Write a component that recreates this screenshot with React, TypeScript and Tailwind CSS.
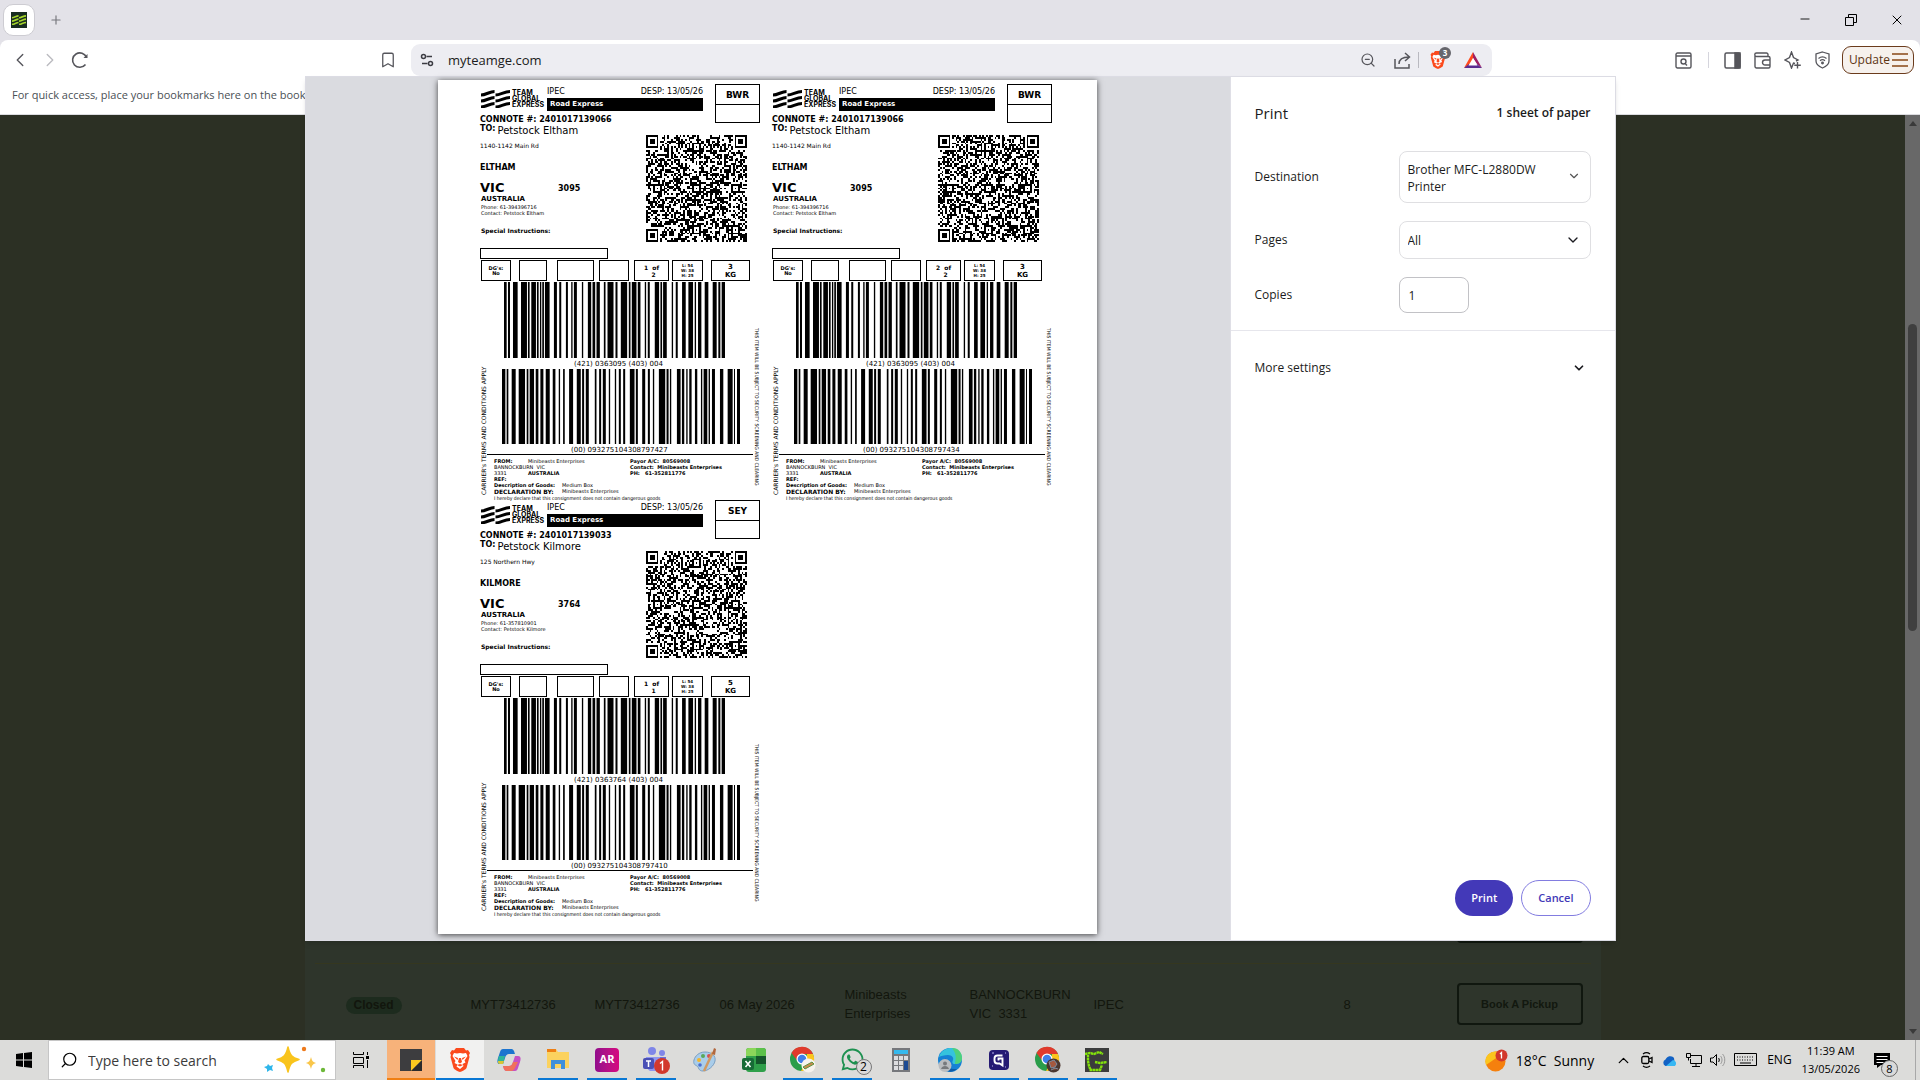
import type { ReactNode } from 'react'
import { Bookmark, ChevronDown, ChevronLeft, ChevronRight, ChevronUp, Minus, Plus, Search, X, ZoomOut } from 'lucide-react'
import { FaWhatsapp } from 'react-icons/fa'

type Consignment = {
  depot: string
  connote: string
  name: string
  street: string
  suburb: string
  postcode: string
  phone: string
  item: string
  count: string
  weight: string
  routing: string
  sscc: string
  seed: number
}

const consignments: Consignment[] = [
  {
    depot: 'BWR', connote: '2401017139066', name: 'Petstock Eltham', street: '1140-1142 Main Rd', suburb: 'ELTHAM',
    postcode: '3095', phone: '61-394396716', item: '1', count: '2', weight: '3',
    routing: '(421) 0363095 (403) 004', sscc: '(00) 093275104308797427', seed: 11,
  },
  {
    depot: 'BWR', connote: '2401017139066', name: 'Petstock Eltham', street: '1140-1142 Main Rd', suburb: 'ELTHAM',
    postcode: '3095', phone: '61-394396716', item: '2', count: '2', weight: '3',
    routing: '(421) 0363095 (403) 004', sscc: '(00) 093275104308797434', seed: 29,
  },
  {
    depot: 'SEY', connote: '2401017139033', name: 'Petstock Kilmore', street: '125 Northern Hwy', suburb: 'KILMORE',
    postcode: '3764', phone: '61-357810901', item: '1', count: '1', weight: '5',
    routing: '(421) 0363764 (403) 004', sscc: '(00) 093275104308797410', seed: 47,
  },
]

// start / end pairs of each bar
const routingBars = [
  222, 230, 234, 240, 249, 263, 273, 291, 294, 299, 304, 318, 321, 326, 330, 334, 337, 342, 345, 359, 372, 381, 388, 394,
  408, 414, 424, 428, 432, 441, 456, 460, 474, 484, 488, 496, 500, 510, 522, 527, 533, 551, 557, 563, 573, 592, 597, 602,
  606, 620, 624, 632, 645, 649, 654, 660, 675, 688, 692, 697, 700, 711, 726, 730, 738, 744, 757, 768, 776, 790, 795, 799,
  805, 815, 825, 836, 849, 861, 866, 872, 876, 886,
]
const ssccBars = [
  217, 227, 231, 236, 246, 258, 267, 286, 291, 296, 300, 313, 318, 326, 332, 341, 348, 360, 369, 377, 387, 391, 400, 405,
  418, 430, 441, 453, 457, 463, 468, 477, 495, 500, 508, 514, 519, 528, 537, 541, 555, 559, 567, 573, 580, 586, 600, 614,
  618, 624, 637, 646, 654, 660, 669, 673, 687, 706, 710, 716, 720, 724, 741, 752, 756, 763, 769, 773, 778, 785, 795, 802,
  813, 817, 821, 832, 836, 840, 846, 855, 870, 880, 893, 908, 912, 915, 921, 930,
]

function Barcode({ bars, className }: { bars: number[]; className: string }) {
  const start = bars[0]
  const end = bars[bars.length - 1]
  let d = ''
  for (let i = 0; i < bars.length; i += 2) {
    d += `M${bars[i] - start} 0H${bars[i + 1] - start}V10H${bars[i] - start}Z`
  }
  return (
    <svg className={className} viewBox={`0 0 ${end - start} 10`} preserveAspectRatio="none" aria-hidden="true">
      <path d={d} fill="#000" />
    </svg>
  )
}

const QR_SIZE = 57

function qrPath(seed: number) {
  let state = seed * 7919
  const random = () => {
    state = (state * 1103515245 + 12345) % 2147483648
    return state / 2147483648
  }
  const ring = (x: number, y: number, cx: number, cy: number) => Math.max(Math.abs(x - cx), Math.abs(y - cy))
  const far = QR_SIZE - 4
  const finders = [[3, 3], [far, 3], [3, far]]
  const aligns = [[28, 6], [6, 28], [28, 28], [50, 28], [28, 50], [50, 50]]
  let d = ''
  for (let y = 0; y < QR_SIZE; y++) {
    for (let x = 0; x < QR_SIZE; x++) {
      let on = random() > 0.5
      if (x === 6) on = y % 2 === 0
      if (y === 6) on = x % 2 === 0
      for (const [cx, cy] of aligns) {
        const r = ring(x, y, cx, cy)
        if (r <= 2) on = r !== 1
      }
      for (const [cx, cy] of finders) {
        const r = ring(x, y, cx, cy)
        if (r <= 4) on = r !== 2 && r !== 4
      }
      if (on) d += `M${x} ${y}h1v1h-1z`
    }
  }
  return d
}

function QrCode({ seed }: { seed: number }) {
  return (
    <svg className="h-[107px] w-[101px]" viewBox="0 0 57 57" preserveAspectRatio="none" shapeRendering="crispEdges" aria-hidden="true">
      <path d={qrPath(seed)} fill="#000" />
    </svg>
  )
}

function Stripes({ className, color }: { className: string; color: string }) {
  return (
    <svg className={className} viewBox="0 0 30 18" preserveAspectRatio="none" fill="none" stroke={color} strokeWidth="3" aria-hidden="true">
      <path d="M0 5C5 5 9 1.500 14 1.500M15 5C20 5 24 1.500 30 1.500M0 11C5 11 9 7.500 14 7.500M15 11C20 11 24 7.500 30 7.500M0 17C5 17 9 13.500 14 13.500M15 17C20 17 24 13.500 30 13.500" />
    </svg>
  )
}

function Cell({ className, children }: { className: string; children?: ReactNode }) {
  return <div className={`flex h-[21px] flex-col items-center justify-center border border-black font-bold ${className}`}>{children}</div>
}

function ShippingLabel({ item }: { item: Consignment }) {
  return (
    <article className="h-[416px] w-[280px] font-['DejaVu_Sans',Verdana,sans-serif] text-black">
      <div className="flex h-[52px] justify-between">
        <div className="w-[223px]">
          <div className="flex h-[30px]">
            <div className="flex w-[67px] gap-[2px] pt-[7px]">
              <Stripes className="ml-px h-[18px] w-[29px]" color="#000" />
              <div className="font-['Inter',sans-serif] text-[7px] leading-[6px] font-bold">
                <div>TEAM</div>
                <div>GLOBAL</div>
                <div>EXPRESS</div>
              </div>
            </div>
            <div className="flex-1">
              <div className="flex h-[15px] items-center justify-between pt-[2px] leading-none">
                <span className="text-[8px]">IPEC</span>
                <span className="text-[8px]">DESP: 13/05/26</span>
              </div>
              <div className="h-[13px] bg-black pl-[3px] text-[7px] leading-[13px] font-bold text-white">Road Express</div>
            </div>
          </div>
          <div className="h-[11px] text-[8px] leading-[13px] font-bold whitespace-nowrap">CONNOTE #: {item.connote}</div>
          <div className="flex h-[11px] gap-[2px] whitespace-nowrap">
            <span className="text-[8px] leading-[10px] font-bold">TO:</span>
            <span className="text-[10px] leading-[13px]">{item.name}</span>
          </div>
        </div>
        <div className="mt-px h-[39px] w-[45px] border border-black text-center text-[9px] font-bold">
          <div className="h-5 border-b border-black leading-[20px]">{item.depot}</div>
        </div>
      </div>

      <div className="flex h-[113px] justify-between pr-[13px]">
        <div className="whitespace-nowrap">
          <div className="pt-[7px] text-[6px] leading-[8px]">{item.street}</div>
          <div className="pt-[13px] text-[8px] leading-[10px] font-bold">{item.suburb}</div>
          <div className="flex pt-2 font-bold">
            <span className="w-[78px] text-[13px] leading-[14px]">VIC</span>
            <span className="text-[8px] leading-[16px]">{item.postcode}</span>
          </div>
          <div className="pl-px text-[7px] leading-[4px] font-bold">AUSTRALIA</div>
          <div className="pt-[3px] pl-px text-[5px] leading-[6px]">
            <div>Phone: {item.phone}</div>
            <div>Contact: {item.name}</div>
          </div>
          <div className="pt-[11px] pl-px text-[6px] leading-[8px] font-bold">Special Instructions:</div>
        </div>
        <QrCode seed={item.seed} />
      </div>

      <div className="h-[11px] w-[128px] border border-black"></div>
      <div className="mt-px flex pl-px">
        <Cell className="w-[30px] text-[5px] leading-[5px]">
          <div>DG's:</div>
          <div>No</div>
        </Cell>
        <Cell className="ml-2 w-[28px]" />
        <Cell className="ml-[10px] w-[37px]" />
        <Cell className="ml-[5px] w-[30px]" />
        <Cell className="ml-[5px] w-[35px] text-[6px] leading-[7px]">
          <div className="whitespace-pre">{item.item}  of</div>
          <div className="pl-1">{item.count}</div>
        </Cell>
        <Cell className="ml-[3px] w-[31px] text-[4px] leading-[5px]">
          <div>L: 54</div>
          <div>W: 38</div>
          <div>H: 25</div>
        </Cell>
        <Cell className="ml-2 w-[39px] text-[7px] leading-[8px]">
          <div>{item.weight}</div>
          <div>KG</div>
        </Cell>
      </div>

      <div className="flex h-[218px]">
        <div className="flex w-[7px] rotate-180 items-start pt-1 text-[6px] leading-[7px] whitespace-nowrap [writing-mode:vertical-rl]">
          CARRIER's TERMS AND CONDITIONS APPLY
        </div>
        <div className="flex-1">
          <Barcode bars={routingBars} className="mt-px ml-[17px] h-[76px] w-[221px]" />
          <div className="h-[11px] pl-[87px] text-[7px] leading-[12px]">{item.routing}</div>
          <Barcode bars={ssccBars} className="ml-[15px] h-[75px] w-[238px]" />
          <div className="h-[11px] border-b border-black pl-[84px] text-[7px] leading-[12px]">{item.sscc}</div>
          <div className="pt-[3px] pl-[7px] text-[5px] leading-[6px] whitespace-nowrap">
            <div className="flex">
              <div className="w-[136px]">
                <div className="flex">
                  <span className="w-[34px] font-bold">FROM:</span>
                  <span>Minibeasts Enterprises</span>
                </div>
                <div className="whitespace-pre">BANNOCKBURN  VIC</div>
                <div className="flex">
                  <span className="w-[34px]">3331</span>
                  <span className="font-bold">AUSTRALIA</span>
                </div>
                <div className="font-bold">REF:</div>
              </div>
              <div className="font-bold whitespace-pre">
                <div>Payor A/C:  80569008</div>
                <div>Contact:  Minibeasts Enterprises</div>
                <div>PH:   61-352811776</div>
              </div>
            </div>
            <div className="flex">
              <span className="w-[68px] font-bold">Description of Goods:</span>
              <span>Medium Box</span>
            </div>
            <div className="flex leading-[7px]">
              <span className="w-[68px] text-[6px] font-bold">DECLARATION BY:</span>
              <span>Minibeasts Enterprises</span>
            </div>
            <div className="font-['DejaVu_Sans_Condensed','DejaVu_Sans',sans-serif]">
              I hereby declare that this consignment does not contain dangerous goods
            </div>
          </div>
        </div>
        <div className="w-[7px] pt-[47px] font-['Liberation_Sans_Narrow','DejaVu_Sans_Condensed',sans-serif] text-[5px] leading-[7px] whitespace-nowrap [writing-mode:vertical-rl]">
          THIS ITEM WILL BE SUBJECT TO SECURITY SCREENING AND CLEARING
        </div>
      </div>
    </article>
  )
}

function PrintDialog() {
  return (
    <div role="dialog" aria-label="Print" className="flex w-[1311px] max-w-full border border-[#dcdce4] bg-white font-['Open_Sans','Noto_Sans',sans-serif] text-[12px] text-[#1b1b20] shadow-md">
      <div className="flex flex-1 justify-center bg-[#dadbe0] pt-[3px] pb-[6px]">
        <div className="grid min-h-[854px] w-[659px] auto-rows-max grid-cols-[292px_292px] bg-white pt-[3px] pl-[42px] shadow-[0_1px_6px_rgba(0,0,0,0.7)]">
          {consignments.map((item) => (
            <ShippingLabel key={item.seed} item={item} />
          ))}
        </div>
      </div>

      <form className="flex w-[385px] flex-col border-l border-[#dfdfe6]">
        <div className="flex items-center justify-between px-6 pt-6">
          <h1 className="text-[15px] leading-6">Print</h1>
          <span className="font-semibold">1 sheet of paper</span>
        </div>
        <div className="mt-[26px] flex items-center justify-between px-6">
          <label htmlFor="destination">Destination</label>
          <div className="relative w-[192px]">
            <select id="destination" className="h-[52px] w-full appearance-none rounded-lg border border-[#dfdfe2] bg-white pt-[2px] pr-10 pl-2 leading-[17px] whitespace-normal">
              <option>Brother MFC-L2880DW Printer</option>
            </select>
            <ChevronDown className="pointer-events-none absolute top-[18px] right-[10px] size-[14px] text-[#555]" />
          </div>
        </div>
        <div className="mt-[18px] flex items-center justify-between px-6">
          <label htmlFor="pages">Pages</label>
          <div className="relative w-[192px]">
            <select id="pages" className="h-[38px] w-full appearance-none rounded-lg border border-[#dfdfe2] bg-white pt-[2px] pr-10 pl-2">
              <option>All</option>
            </select>
            <ChevronDown className="pointer-events-none absolute top-[11px] right-[10px] size-4" />
          </div>
        </div>
        <div className="mt-[18px] flex items-center px-6">
          <label htmlFor="copies" className="w-[144px]">Copies</label>
          <input id="copies" type="text" defaultValue="1" className="h-9 w-[70px] rounded-lg border border-[#c2c2c6] bg-white px-[9px]" />
        </div>
        <button type="button" className="mt-[17px] flex h-[74px] items-center justify-between border-t border-[#e6e6ec] pr-[29px] pl-6">
          More settings
          <ChevronDown className="size-[14px]" strokeWidth={3} />
        </button>
        <div className="mt-auto flex justify-end gap-2 px-6 pb-6 text-[11px] font-semibold">
          <button type="submit" className="h-9 rounded-full bg-[#4339b8] px-4 text-white">Print</button>
          <button type="button" className="h-9 rounded-full border border-[#827ce0] px-4 text-[#4339b8]">Cancel</button>
        </div>
      </form>
    </div>
  )
}

function BraveIcon({ className }: { className: string }) {
  return (
    <svg className={className} viewBox="0 0 20 24" aria-hidden="true">
      <path d="M6 0h8l2 2.500 2-.5 2 3-1 2 .5 2-3 11c-.5 1.500-5 3.500-6.500 4-1.500-.5-6-2.500-6.500-4L.500 9 1 7 0 5l2-3 2 .5z" fill="#fb4a1d" />
      <path d="M4 5l3 .5L10 5l3 .5 3-.5 1.500 3-3 4.500 1 2-3 1.500 1 2L10 21l-3.500-2.500 1-2-3-1.500 1-2-3-5z" fill="#fff" />
      <path d="M4 8.500l4 1.500-.5 2zM16 8.500L12 10l.5 2zM9 10h2l1 4-2 1.500L8 14zM7 17l3-1 3 1-3 1.500z" fill="#fb4a1d" />
    </svg>
  )
}

function TuneIcon() {
  return (
    <svg className="size-[14px]" viewBox="0 0 14 14" fill="none" stroke="#3c3c43" strokeWidth="1.500" aria-hidden="true">
      <circle cx="3.500" cy="3.500" r="2" />
      <path d="M6.500 3.500H12M2 10.500h5.500" />
      <circle cx="10.500" cy="10.500" r="2" />
    </svg>
  )
}

function BrowserChrome() {
  return (
    <header className="bg-[#e3e2e8] font-['Open_Sans','Noto_Sans',sans-serif]">
      <div className="flex h-10 items-center">
        <button type="button" aria-label="Team Global Express tab" className="ml-[3px] flex h-8 w-8 items-center justify-center rounded-[10px] border border-[#cdccd2] bg-white">
          <span className="flex size-4 items-center justify-center bg-[#182c20]">
            <Stripes className="h-[10px] w-[14px]" color="#a5d62b" />
          </span>
        </button>
        <button type="button" aria-label="New tab" className="ml-[14px] text-[#77777d]">
          <Plus className="size-[14px]" />
        </button>
        <div className="ml-auto flex text-black">
          <button type="button" aria-label="Minimize" className="flex w-[46px] justify-center"><Minus className="size-[14px]" strokeWidth={1.5} /></button>
          <button type="button" aria-label="Restore" className="flex w-[46px] items-center justify-center">
            <svg className="size-3" viewBox="0 0 12 12" fill="none" stroke="currentColor">
              <path d="M.5 3.500h8v8h-8zM3.500 3.500v-3h8v8h-3" />
            </svg>
          </button>
          <button type="button" aria-label="Close" className="flex w-[46px] justify-center"><X className="size-4" strokeWidth={1.5} /></button>
        </div>
      </div>

      <div className="rounded-t-lg bg-white">
        <div className="flex h-10 items-center text-[#55555b]">
          <button type="button" aria-label="Back" className="ml-[9px]"><ChevronLeft className="size-[22px]" strokeWidth={1.5} /></button>
          <button type="button" aria-label="Forward" className="ml-2 text-[#bbbbc0]"><ChevronRight className="size-[22px]" strokeWidth={1.5} /></button>
          <button type="button" aria-label="Reload" className="ml-[10px]">
            <svg className="size-[18px]" viewBox="0 0 18 18" fill="none" stroke="currentColor" strokeWidth="1.600">
              <path d="M14.500 13.500A7.200 7.200 0 1 1 15.500 6.500" />
              <path d="M12.500 7h4V3z" fill="currentColor" stroke="none" />
            </svg>
          </button>
          <button type="button" aria-label="Bookmark this tab" className="ml-[290px]"><Bookmark className="size-[18px]" strokeWidth={1.7} /></button>
          <div className="ml-[14px] flex h-8 w-[1081px] items-center rounded-[9px] bg-[#ededf2] pl-[9px]">
            <TuneIcon />
            <input aria-label="Address" defaultValue="myteamge.com" className="ml-[14px] flex-1 bg-transparent pt-px text-[13px] text-[#1b1b20]" />
            <ZoomOut className="size-4" strokeWidth={1.8} />
            <svg className="ml-[18px] size-[17px]" viewBox="0 0 17 17" fill="none" stroke="currentColor" strokeWidth="1.500" aria-hidden="true">
              <path d="M1 7v9h14v-4M5 12c0-5 3-7 10-7M11 1l4.500 4L11 9" />
            </svg>
            <span className="ml-[7px] h-4 w-px bg-[#b9b9c0]"></span>
            <span className="relative ml-[11px]">
              <BraveIcon className="h-[18px] w-4" />
              <span className="absolute -top-1 left-[9px] flex h-3 w-3 items-center justify-center rounded-full bg-[#66666c] text-[8px] leading-none font-bold text-white">3</span>
            </span>
            <svg className="mr-[10px] ml-[18px] h-4 w-[18px]" viewBox="0 0 18 16" aria-hidden="true">
              <path d="M9 0L0 16l9-5z" fill="#ff4a1c" />
              <path d="M9 0l9 16-5-4-4-6z" fill="#9e1f63" />
              <path d="M0 16h18l-5-4H5z" fill="#5b2d90" />
              <path d="M9 6l-4.500 7.500h9z" fill="#fff" />
            </svg>
          </div>
          <div className="mr-[6px] ml-auto flex items-center">
            <svg className="size-[17px]" viewBox="0 0 17 17" fill="none" stroke="currentColor" strokeWidth="1.400" aria-hidden="true">
              <rect x="1" y="1" width="15" height="15" rx="1.500" />
              <path d="M1 4h15M10.500 12l1.500 1.500" />
              <circle cx="8.500" cy="9.500" r="2.500" />
            </svg>
            <span className="ml-4 h-4 w-px bg-[#d5d5dd]"></span>
            <svg className="ml-[15px] size-[17px]" viewBox="0 0 17 17" fill="none" stroke="currentColor" strokeWidth="1.500" aria-hidden="true">
              <rect x="1" y="1" width="15" height="15" rx="1.500" />
              <path d="M11 1h5v15h-5z" fill="currentColor" />
            </svg>
            <svg className="ml-[13px] size-[17px]" viewBox="0 0 17 17" fill="none" stroke="currentColor" strokeWidth="1.400" aria-hidden="true">
              <path d="M14 4V2.500A1.500 1.500 0 0 0 12.500 1h-10a1.500 1.500 0 0 0 0 3.500h12A1.500 1.500 0 0 1 16 6v8.500a1.500 1.500 0 0 1-1.500 1.500h-12A1.500 1.500 0 0 1 1 14.500V3M16 8h-5a2.500 2.500 0 0 0 0 5h5" />
            </svg>
            <svg className="ml-[13px] size-[18px]" viewBox="0 0 18 18" fill="none" stroke="currentColor" strokeWidth="1.400" aria-hidden="true">
              <path d="M11 12.500L9.500 12 7.500 17 5.500 11.500 1 9l4.500-2.500L7.500 1l2 5.500L14 9l-2 1M13.500 11v6.500M10.300 14.200h6.500" />
            </svg>
            <svg className="ml-[13px] h-[18px] w-[15px]" viewBox="0 0 15 18" fill="none" stroke="currentColor" strokeWidth="1.300" aria-hidden="true">
              <path d="M7.500 1L14 3v7c0 4-4 6-6.500 7C5 16 1 14 1 10V3zM3.500 7.500c2.500-2 5.500-2 8 0M5 9.700c1.500-1.200 3.500-1.200 5 0" />
              <circle cx="7.500" cy="12" r=".8" fill="currentColor" />
            </svg>
            <button type="button" className="ml-3 flex h-7 items-center gap-[2px] rounded-[9px] border border-[#6b3b1c] bg-[#f6f1ed] pr-[5px] pl-[6px] text-[12px] text-[#5c3413]">
              Update
              <svg className="h-[14px] w-[16px]" viewBox="0 0 16 14" stroke="#a3714c" strokeWidth="2">
                <path d="M0 1h16M0 7h16M0 13h16" />
              </svg>
            </button>
          </div>
        </div>
        <div className="h-[35px] border-b border-[#dcdce0] pl-3 text-[11px] leading-[30px] text-[#4a5055]">
          For quick access, place your bookmarks here on the bookmarks bar.
        </div>
      </div>
    </header>
  )
}

function PickupButton() {
  return (
    <button type="button" className="h-[42px] w-[126px] rounded border-2 border-[#10170f] text-[11px] font-bold text-[#12180f]">
      Book A Pickup
    </button>
  )
}

function BookingsTable() {
  return (
    <div className="mx-auto w-[1296px] bg-[#2e352b] px-[10px] pt-[766px]">
      <table className="w-full table-fixed font-['Liberation_Sans',Arial,sans-serif] text-[13px] leading-[19px] text-[#12160d]">
        <colgroup>
          <col className="w-[156px]" />
          <col className="w-[124px]" />
          <col className="w-[125px]" />
          <col className="w-[125px]" />
          <col className="w-[125px]" />
          <col className="w-[124px]" />
          <col className="w-[250px]" />
          <col />
          <col className="w-[134px]" />
        </colgroup>
        <tbody>
          <tr className="h-[82px] border-b border-[#35371f]">
            <td colSpan={8}></td>
            <td><PickupButton /></td>
          </tr>
          <tr className="h-[82px]">
            <td className="pl-[31px]">
              <span className="inline-block rounded-full bg-[#1d2b1e] px-2 text-[12px] leading-[17px] font-bold">Closed</span>
            </td>
            <td>MYT73412736</td>
            <td>MYT73412736</td>
            <td>06 May 2026</td>
            <td>Minibeasts<br />Enterprises</td>
            <td>BANNOCKBURN<br />VIC &nbsp;3331</td>
            <td>IPEC</td>
            <td>8</td>
            <td><PickupButton /></td>
          </tr>
        </tbody>
      </table>
    </div>
  )
}

function ChromeIcon({ badge }: { badge: 'food' | 'photo' }) {
  return (
    <svg className="size-7" viewBox="0 0 28 28" aria-hidden="true">
      <circle cx="13" cy="13" r="12" fill="#2a9d4a" />
      <path d="M2.500 7A12 12 0 0 1 24 8H13a5 5 0 0 0-4.500 7z" fill="#e03a2c" />
      <path d="M24 8a12 12 0 0 1-12 17l5-9 1-8z" fill="#fbc51d" />
      <circle cx="13" cy="13" r="5.500" fill="#fff" />
      <circle cx="13" cy="13" r="4.300" fill="#3f7fe8" />
      <circle cx="19.500" cy="19.500" r="7" fill={badge === 'food' ? '#f6f3ee' : '#4b3730'} />
      {badge === 'food' ? (
        <path d="M14 21l9-5 2 2-9 5z" fill="#c98b4e" stroke="#5d9440" />
      ) : (
        <path d="M15 16l5-2 3 4-2 3-4 1zM17 24l4-2 3 1" fill="#a4583f" stroke="#7c8ba0" />
      )}
    </svg>
  )
}

const apps: { label: string; line?: string; bg?: string; icon: ReactNode }[] = [
  {
    label: 'Sticky Notes', line: 'w-full bg-[#f07f13]', bg: 'bg-[#f7b27a]',
    icon: (
      <svg className="size-[22px]" viewBox="0 0 22 22">
        <path d="M0 0h22v11L11 22H0z" fill="#3d3d3f" />
        <path d="M11 22V11h11z" fill="#fbc91f" />
        <path d="M11 22l11-11v11z" fill="#2b2b2c" />
      </svg>
    ),
  },
  { label: 'Brave', line: 'w-full bg-[#0a78d4]', bg: 'bg-[#f1f1f0]', icon: <BraveIcon className="h-6 w-5" /> },
  {
    label: 'Copilot',
    icon: (
      <svg className="size-6" viewBox="0 0 24 24">
        <path d="M6 1h8c2 0 3 1 4 5h-6c-2 0-3 1-4 4l-2 6H3c-3 0-3-3-2-6l2-6c.5-2 1.500-3 3-3z" fill="#1c74cf" />
        <path d="M2 8h6l-2 8H3c-3 0-2-5-1-8z" fill="#2fb59a" />
        <path d="M1 13h6l-1 3H3c-1.500 0-2.200-1-2-3z" fill="#d9c534" />
        <path d="M18 23h-8c-2 0-3-1-4-5h6c2 0 3-1 4-4l2-6h3c3 0 3 3 2 6l-2 6c-.5 2-1.500 3-3 3z" fill="#c552c4" />
        <path d="M10 23c-2 0-3-1-4-5h6c2 0 3-1 4-4h5l-3 6c-1 2-2 3-4 3z" fill="#f0715c" />
      </svg>
    ),
  },
  {
    label: 'File Explorer', line: 'w-10 bg-[#0a78d4]',
    icon: (
      <svg className="h-[22px] w-[22px]" viewBox="0 0 22 22">
        <path d="M0 0h9l2 3h11v16H0z" fill="#fbd25f" />
        <path d="M0 0h9v3H0z" fill="#ee7f14" />
        <path d="M4 20v-9h14v9h-4v-5H8v5z" fill="#3f8fdb" />
      </svg>
    ),
  },
  {
    label: 'AR', line: 'w-10 bg-[#0a78d4]',
    icon: <span className="flex size-6 items-center justify-center rounded bg-linear-to-r from-[#920b8c] to-[#d6067f] font-['Open_Sans',sans-serif] text-[11px] font-bold text-white">AR</span>,
  },
  {
    label: 'Teams', line: 'w-10 bg-[#0a78d4]',
    icon: (
      <svg className="size-7" viewBox="0 0 28 28">
        <circle cx="10" cy="5" r="4" fill="#7f86e8" />
        <circle cx="20" cy="7" r="3" fill="#7f86e8" />
        <path d="M4 11h14v14H8c-4-2-5-8-4-14z" fill="#8f96f0" />
        <path d="M18 11h6v8h-6z" fill="#6970d8" />
        <rect x="1" y="12" width="11" height="11" rx="2" fill="#4a50b5" />
        <path d="M4 15h5M6.500 15v6" stroke="#fff" strokeWidth="1.500" />
        <circle cx="20" cy="20" r="8" fill="#d2382c" />
        <path d="M18 17.500l2.500-2v9" fill="none" stroke="#fff" strokeWidth="1.400" />
      </svg>
    ),
  },
  {
    label: 'Paint',
    icon: (
      <svg className="size-6" viewBox="0 0 24 24">
        <path d="M12 4c7 0 11 4 10 9s-7 10-12 10-4-4-6-5-4-2-3-6 5-8 11-8z" fill="#a9cdea" stroke="#7a9ec2" />
        <circle cx="6" cy="12" r="2" fill="#f2b52b" />
        <circle cx="10" cy="8" r="2" fill="#59a85a" />
        <circle cx="16" cy="8" r="2" fill="#d85050" />
        <circle cx="7" cy="17" r="1.800" fill="#4a6fd0" />
        <path d="M11 23L20 4" stroke="#d09a62" strokeWidth="2.500" />
        <path d="M19 6l2-6 2 1-1 6z" fill="#b2673d" />
      </svg>
    ),
  },
  {
    label: 'Excel',
    icon: (
      <svg className="size-6" viewBox="0 0 24 24">
        <rect x="4" width="20" height="24" rx="3" fill="#2fa04a" />
        <path d="M4 3a3 3 0 0 1 3-3h7v8H4z" fill="#8bd65a" />
        <path d="M14 0h7a3 3 0 0 1 3 3v5H14z" fill="#5cc14a" />
        <path d="M14 8h10v8H14z" fill="#14562b" />
        <rect y="10" width="12" height="12" rx="2" fill="#176b36" />
        <path d="M3.500 13l5 6M8.500 13l-5 6" stroke="#fff" strokeWidth="1.600" />
      </svg>
    ),
  },
  { label: 'Chrome', line: 'w-10 bg-[#0a78d4]', icon: <ChromeIcon badge="food" /> },
  {
    label: 'WhatsApp', line: 'w-10 bg-[#0a78d4]',
    icon: (
      <span className="relative">
        <FaWhatsapp className="size-[25px] text-[#1d9150]" />
        <span className="absolute top-3 left-4 flex size-4 items-center justify-center rounded-full border border-[#777] bg-[#dadada] text-[12px] leading-none text-black">2</span>
      </span>
    ),
  },
  {
    label: 'Calculator',
    icon: (
      <svg className="h-6 w-[18px]" viewBox="0 0 18 24">
        <path d="M0 0h18v24H0z" fill="#76787c" />
        <path d="M2 2h14v4H2z" fill="#35b9ee" />
        <path d="M2 8h4v4H2zM7 8h4v4H7zM12 8h4v4h-4zM2 13h4v4H2zM7 13h4v4H7zM2 18h4v4H2zM7 18h4v4H7z" fill="#dcdde0" />
        <path d="M12 13h4v9h-4z" fill="#1c4b94" />
      </svg>
    ),
  },
  {
    label: 'Edge', line: 'w-10 bg-[#0a78d4]',
    icon: (
      <svg className="size-6" viewBox="0 0 24 24">
        <circle cx="12" cy="12" r="12" fill="#1681d4" />
        <path d="M1 9C3 2 9 0 13 0c7 0 11 5 11 10s-4 6-7 6-3-2-2-4-1-5-5-5-7 1-9 2z" fill="#35c3dd" />
        <path d="M14 0c7 0 10 5 10 10s-4 6-7 6c0-4 3-8-3-16z" fill="#4fd17c" />
        <path d="M8 10c-2 4 1 12 11 11l-3 2C8 26 0 18 8 10z" fill="#0d5ba8" />
        <circle cx="7" cy="17.500" r="6.500" fill="#b9bcc0" />
        <circle cx="7" cy="15.500" r="2" fill="#77797d" />
        <path d="M3 21c1-4 7-4 8 0z" fill="#77797d" />
      </svg>
    ),
  },
  {
    label: 'Chat', line: 'w-10 bg-[#0a78d4]',
    icon: (
      <svg className="size-5" viewBox="0 0 20 20">
        <rect width="20" height="20" rx="4" fill="#251a74" />
        <path d="M13.500 5.500H8.500a3 3 0 0 0-3 3v2a3 3 0 0 0 3 3h2l3 2v-7H9.500v2" fill="none" stroke="#fff" strokeWidth="1.900" />
        <path d="M3 3h2M16 3h1M3 16h1M16 17h1" stroke="#b9b4f0" />
      </svg>
    ),
  },
  { label: 'Chrome profile', line: 'w-10 bg-[#0a78d4]', icon: <ChromeIcon badge="photo" /> },
  {
    label: 'Greenshot', line: 'w-10 bg-[#0a78d4]',
    icon: (
      <svg className="size-6" viewBox="0 0 24 24">
        <path d="M0 0h24v24H0z" fill="#3b3c3c" />
        <path d="M0 6l5-1 4 1 5-2 4 2M3 7v6l1 5 2 5M5 22h10l2-5M10 14l5 1 7-1" fill="none" stroke="#84e30c" strokeWidth="2.400" strokeDasharray="2.600 .4" />
      </svg>
    ),
  },
]

function Taskbar() {
  return (
    <footer className="flex h-10 items-center bg-[#dcdcda] font-['Open_Sans','Noto_Sans',sans-serif] text-black">
      <button type="button" aria-label="Start" className="flex w-12 justify-center">
        <svg className="size-4" viewBox="0 0 16 16">
          <path d="M0 2l7-1v6.500H0zM8 1l8-1v7.500H8zM0 8.500h7V15l-7-1zM8 8.500h8V16l-8-1z" />
        </svg>
      </button>
      <label className="flex h-10 w-[288px] items-center border border-[#c6c6c6] bg-white pl-[11px]">
        <Search className="size-[18px] -scale-x-100" strokeWidth={1.6} />
        <input aria-label="Search" placeholder="Type here to search" className="ml-[10px] w-0 flex-1 text-[14px] placeholder:text-[#3b3b3b]" />
        <svg className="mr-[9px] h-7 w-[62px]" viewBox="0 0 62 28" aria-hidden="true">
          <path d="M24 1c2 8.500 4 10.500 11 12.500-7 2-9 4-11 12.500-2-8.500-4-10.500-11-12.500 7-2 9-4 11-12.500z" fill="#f9c41c" stroke="#f9c41c" strokeWidth="1.500" strokeLinejoin="round" />
          <path d="M47 11c1 4 2 5 5 6-3 1-4 2-5 6-1-4-2-5-5-6 3-1 4-2 5-6z" fill="#f9c64a" />
          <path d="M4 18l2 2 3-1-1 3 1 3-3-1-3 2v-3l-3-2 3-1z" fill="#2fb6ea" />
          <circle cx="40" cy="3" r="2.200" fill="#ee7a1c" />
          <circle cx="59" cy="24" r="2.200" fill="#6db839" />
        </svg>
      </label>
      <button type="button" aria-label="Task view" className="mr-[2px] flex w-[49px] justify-center">
        <svg className="size-4" viewBox="0 0 16 16" fill="none" stroke="currentColor">
          <path d="M.5 0v2.500h10V0M.5 5.500h10v6H.5zM.5 16v-2.500h10V16M14.500 0v3M14.500 8v8" />
          <path d="M13 4h3v3h-3z" fill="currentColor" stroke="none" />
        </svg>
      </button>
      <div className="flex">
        {apps.map((app) => (
          <button key={app.label} type="button" aria-label={app.label} className={`mr-px flex h-10 w-12 flex-col items-center ${app.bg ?? ''}`}>
            <span className="flex h-[38px] items-center justify-center pt-px">{app.icon}</span>
            <span className={`h-[2px] ${app.line ?? ''}`}></span>
          </button>
        ))}
      </div>
      <div className="ml-auto flex h-10 items-center">
        <svg className="h-[23px] w-[23px]" viewBox="0 0 23 23" aria-hidden="true">
          <circle cx="10.500" cy="12.500" r="10" fill="#f5800d" />
          <path d="M1 16A10 10 0 0 1 17 5z" fill="#fbc51d" />
          <circle cx="16.500" cy="6.500" r="6" fill="#d2382c" />
          <path d="M15 5l1.500-1.500v6" fill="none" stroke="#fff" strokeWidth="1.300" />
        </svg>
        <span className="ml-2 text-[14px] whitespace-pre">18°C  Sunny</span>
        <ChevronUp className="ml-[21px] size-[17px]" strokeWidth={1.8} />
        <svg className="ml-[9px] h-4 w-3" viewBox="0 0 12 16" fill="none" stroke="currentColor" strokeWidth="1.300" aria-hidden="true">
          <rect x=".8" y="4.500" width="7" height="7" rx="1.500" />
          <path d="M8 7l3-1.500v5L8 9M2 2c2-1.500 5-1.500 7 0M2 14c2 1.500 5 1.500 7 0" />
        </svg>
        <svg className="ml-[9px] h-[11px] w-4" viewBox="0 0 16 11" aria-hidden="true">
          <path d="M3.500 11a3.500 3.500 0 0 1 0-6.500A5 5 0 0 1 12 3l1 8z" fill="#1262c4" />
          <path d="M4 11l7-6a3.500 3.500 0 0 1 2 6z" fill="#37b7f3" />
        </svg>
        <svg className="ml-2 h-[14px] w-4" viewBox="0 0 16 14" fill="none" stroke="currentColor" aria-hidden="true">
          <path d="M5 2.500h10.500v8H4.500V6M10 10.500v3M6 13.500h8M.5 .5h4v4h-4zM2.500 4.500v3" />
        </svg>
        <svg className="ml-2 h-[14px] w-4" viewBox="0 0 16 14" fill="none" stroke="currentColor" aria-hidden="true">
          <path d="M.5 5v4h2.500l3.500 3.500v-11L3 5zM8.500 5c1 1 1 3 0 4" />
          <path d="M10.500 3c2 2 2 6 0 8M12.500 1c3 3 3 9 0 12" stroke="#999" />
        </svg>
        <svg className="ml-2 h-[14px] w-[23px]" viewBox="0 0 23 14" fill="none" stroke="currentColor" aria-hidden="true">
          <path d="M.5 .5h22v12H.5zM6 10h11" />
          <path d="M3 4h17M3 7h17" strokeDasharray="1 1.500" />
        </svg>
        <span className="ml-[10px] text-[12px]">ENG</span>
        <div className="ml-[10px] text-center text-[11px] leading-[18px]">
          <div>11:39 AM</div>
          <div>13/05/2026</div>
        </div>
        <span className="relative mr-[25px] ml-[14px]">
          <svg className="h-[15px] w-4" viewBox="0 0 16 15" aria-hidden="true">
            <path d="M0 0h16v12H7l-4 3v-3H0z" />
            <path d="M2.500 3.500h11M2.500 6.500h11M2.500 9.500h7" stroke="#fff" />
          </svg>
          <span className="absolute top-[7px] left-[7px] flex size-[17px] items-center justify-center rounded-full border border-[#666] bg-[#d9d9d9] text-[11px] leading-none">8</span>
        </span>
        <span className="mr-1 h-10 w-px bg-[#a8a8a8]"></span>
      </div>
    </footer>
  )
}

export default function App() {
  return (
    <div className="relative flex h-screen flex-col overflow-hidden">
      <BrowserChrome />
      <main className="flex min-h-0 flex-1 bg-[#2c3024]">
        <div className="flex-1 overflow-hidden">
          <BookingsTable />
        </div>
        <div className="flex w-[15px] flex-col items-center bg-[#686868] py-[6px]">
          <svg className="h-[5px] w-2" viewBox="0 0 8 5"><path d="M4 0l4 5H0z" fill="#3a3a3a" /></svg>
          <span className="mt-[198px] h-[307px] w-[9px] rounded-full bg-[#3f3f3f]"></span>
          <svg className="mt-auto h-[5px] w-2" viewBox="0 0 8 5"><path d="M0 0h8L4 5z" fill="#3a3a3a" /></svg>
        </div>
      </main>
      <Taskbar />
      <div className="absolute inset-x-0 top-[76px] flex justify-center">
        <PrintDialog />
      </div>
    </div>
  )
}
